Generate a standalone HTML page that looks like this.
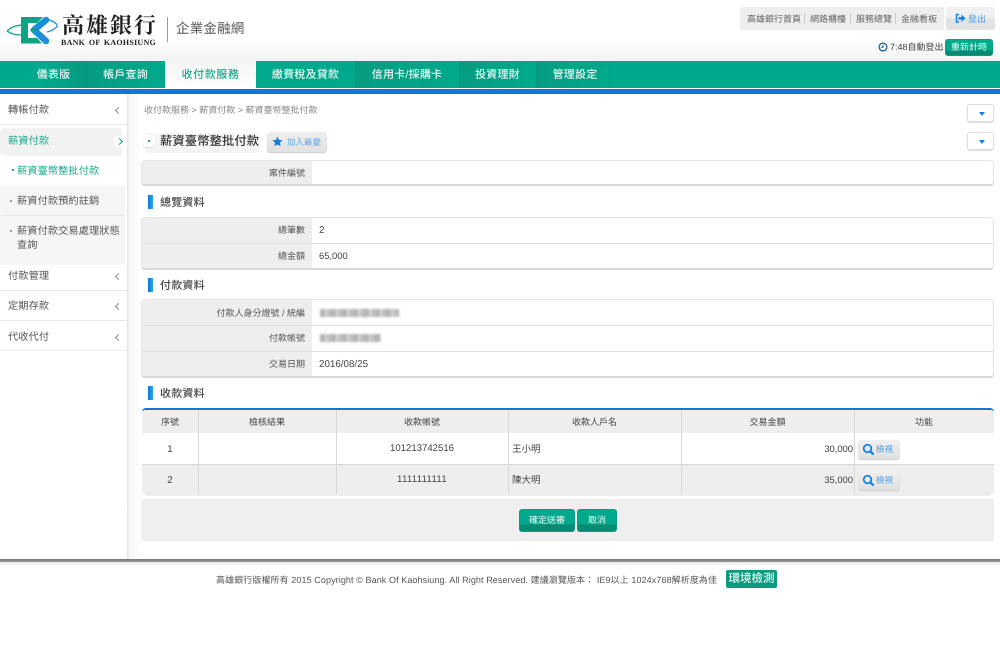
<!DOCTYPE html>
<html lang="zh-Hant"><head><meta charset="utf-8"><title>企業金融網</title>
<style>
html,body{margin:0;padding:0;background:#fff}
#p{position:relative;width:1000px;height:657px;overflow:hidden;font-family:"Liberation Sans","Noto Sans CJK TC",sans-serif;font-size:10px;color:#555;background:#fff;text-rendering:geometricPrecision}
#p div,#p span.a{position:absolute;box-sizing:border-box;white-space:nowrap}
.nav{top:61px;height:27px;line-height:29px;text-align:center;color:#e6f6f1;font-size:11px;letter-spacing:.2px;background:#00a98b;font-weight:500}
.side{left:8px;font-size:10.2px;color:#555;line-height:14px;letter-spacing:.1px}
.sep{left:0;width:127px;height:1px;background:#e9e9e9}
.arr{left:116px;width:5px;height:5px;border-left:1px solid #888;border-bottom:1px solid #888;transform:rotate(45deg)}
.box{left:141px;width:853px;background:#fff;border:1px solid #e6e6e6;border-bottom:2px solid #d8d8d8;border-radius:4px;overflow:hidden}
.lab{left:0;width:170px;background:#eee}
.rowl{left:141px;width:170px;text-align:right;padding-right:6px;font-size:9px;color:#555;height:14px;line-height:14px}
.val{left:319px;font-size:9.800px;color:#444;height:14px;line-height:14px}
.h2{left:160px;font-size:11px;font-weight:500;color:#444;line-height:14px;letter-spacing:.2px}
.bar{left:148px;width:5px;height:14px;background:linear-gradient(90deg,#0a78d8,#2aa4ee)}
.blur{left:320px;height:8px;background:repeating-linear-gradient(90deg,#b4b4b4 0 5px,#d8d8d8 5px 7px,#c0c0c0 7px 11px);filter:blur(1px)}
.th{top:415px;height:14px;line-height:14px;text-align:center;font-size:9px;color:#444}
.td{height:14px;line-height:14px;font-size:9.800px;color:#444}
.vl{width:1px;top:410px;height:85px;background:#d8d8d8}
.btn{background:linear-gradient(#00a98b 0 70%,#078a72 70%);border-radius:3px;color:#e8f8f3;text-align:center;border:1px solid #0d9a80}
.view{left:858px;width:42px;height:19px;background:linear-gradient(#f0f0f0,#e0e0e0);border-radius:3px;box-shadow:0 1px 1px #ccc;font-size:8.500px;color:#4a9de8;line-height:19px;padding-left:18px}
.dd{left:967px;width:27px;height:18px;background:#fff;border:1px solid #ddd;border-radius:3px;box-shadow:0 1px 1px #ddd}
.dd:after{content:"";position:absolute;left:11px;top:7px;border:3px solid transparent;border-top:4px solid #1a7fd8}
.dot{left:10px;width:2px;height:2px;background:#999}
</style></head><body><div id="p">

<!-- header gradient -->
<div style="left:0;top:40px;width:1000px;height:21px;background:linear-gradient(#fff,#f2f2f2)"></div>

<!-- logo -->
<svg style="position:absolute;left:5px;top:14px" width="56" height="34" viewBox="0 0 56 34">
<path d="M2 17C6 13 11 11.500 16 11" fill="none" stroke="#0fa285" stroke-width="1.300"/>
<path d="M2 17C6 20 11 21 16 21" fill="none" stroke="#0fa285" stroke-width="1.300"/>
<path d="M41 5C47 6.500 53 9.500 52 12.500C50 15 46 17 42 18" fill="none" stroke="#1b8fdc" stroke-width="1.300"/>
<path d="M16 3H38L32 9H23V24H32L37 29.500H16Z" fill="#0fa285"/>
<path d="M41 6L29 16L41 27" fill="none" stroke="#1b8fdc" stroke-width="6.500" stroke-linecap="round" stroke-linejoin="round"/>
<path d="M25 16l3-3 3 3-3 3z" fill="#0fa285"/>
</svg>
<div style="left:62px;top:12px;font-family:'Liberation Serif','Noto Serif CJK SC',serif;font-size:22px;font-weight:700;color:#222;letter-spacing:2px;line-height:27px">高雄銀行</div>
<div style="left:61px;top:38px;font-family:'Liberation Serif',serif;font-size:8px;font-weight:700;color:#222;letter-spacing:.25px;line-height:10px;word-spacing:1.500px">BANK OF KAOHSIUNG</div>
<div style="left:167px;top:17px;width:1px;height:25px;background:#999"></div>
<div style="left:176px;top:20px;font-size:13.500px;color:#555;line-height:18px;letter-spacing:.2px">企業金融網</div>

<!-- top right -->
<div style="left:740px;top:7px;width:204px;height:23px;background:#eee;border-radius:2px"></div>
<div style="left:747px;top:13px;font-size:9px;color:#666;line-height:12px">高雄銀行首頁</div>
<div style="left:804px;top:13px;width:1px;height:11px;background:#ccc"></div>
<div style="left:810px;top:13px;font-size:9px;color:#666;line-height:12px">網路櫃檯</div>
<div style="left:850px;top:13px;width:1px;height:11px;background:#ccc"></div>
<div style="left:856px;top:13px;font-size:9px;color:#666;line-height:12px">服務總覽</div>
<div style="left:895px;top:13px;width:1px;height:11px;background:#ccc"></div>
<div style="left:901px;top:13px;font-size:9px;color:#666;line-height:12px">金融看板</div>
<div style="left:946px;top:7px;width:49px;height:23px;background:linear-gradient(#f0f0f0 50%,#e2e2e2 50%);border-radius:2px"></div>
<svg style="position:absolute;left:955px;top:13px" width="11" height="11" viewBox="0 0 11 11"><path d="M4 1.500H1.500V9H4" fill="none" stroke="#1a84e0" stroke-width="1.500"/><path d="M3.500 4H6.500V1.500L10.500 5.300 6.500 9V6.500H3.500Z" fill="#1a84e0"/></svg>
<div style="left:968px;top:13px;font-size:9px;color:#4a9de8;line-height:12px">登出</div>
<svg style="position:absolute;left:878px;top:42px" width="10" height="10" viewBox="0 0 10 10"><circle cx="5" cy="5" r="3.900" fill="none" stroke="#1a5f96" stroke-width="1.300"/><path d="M5 2.800V5.300H3" fill="none" stroke="#1a5f96" stroke-width="1"/></svg>
<div style="left:890px;top:41px;font-size:9px;color:#444;line-height:13px">7:48自動登出</div>
<div class="btn" style="left:945px;top:39px;width:48px;height:17px;font-size:9px;line-height:15px">重新計時</div>

<!-- nav -->
<div class="nav" style="left:0;width:1000px"></div>
<div class="nav" style="left:0;width:87px;padding-left:20px;background:linear-gradient(90deg,#00a98b 50%,#059a80)">儀表版</div>
<div class="nav" style="left:87px;width:77px;background:linear-gradient(90deg,#079c82,#00a98b)">帳戶查詢</div>
<div class="nav" style="left:165px;width:91px;top:61px;height:28px;color:#1aa88d;letter-spacing:.6px;background:linear-gradient(#f4f4f4,#fff)">收付款服務</div>
<div class="nav" style="left:256px;width:99px;background:#00a98b">繳費稅及貸款</div>
<div class="nav" style="left:355px;width:104px;background:linear-gradient(90deg,#079c82,#00a98b)">信用卡/採購卡</div>
<div class="nav" style="left:459px;width:77px;background:linear-gradient(90deg,#079c82,#00a98b)">投資理財</div>
<div class="nav" style="left:536px;width:78px;background:linear-gradient(90deg,#079c82,#00a98b)">管理設定</div>
<div style="left:0;top:89px;width:1000px;height:5px;background:#0f78d6"></div>

<!-- side -->
<div style="left:127px;top:94px;width:14px;height:466px;background:linear-gradient(90deg,#e4e4e4,#f7f7f7 20%,#fff)"></div>
<div style="left:0;top:128px;width:122px;height:28px;background:#f2f2f2;border-radius:4px"></div>
<div style="left:0;top:186px;width:125px;height:79px;background:#f6f6f6"></div>
<div class="side" style="top:104px">轉帳付款</div><div class="arr" style="top:108px"></div><div class="sep" style="top:124px"></div>
<div class="side" style="top:135px;color:#1aa88d">薪資付款</div>
<div style="left:114px;top:136px;width:13px;height:11px;background:#fff;border-radius:2px"></div>
<div style="left:117px;top:139px;width:5px;height:5px;border-right:1.500px solid #0b9a80;border-top:1.500px solid #0b9a80;transform:rotate(45deg)"></div>
<div class="dot" style="left:12px;top:169px;background:#1aa88d"></div>
<div class="side" style="left:17px;top:165px;color:#1aa88d">薪資臺幣整批付款</div>
<div class="dot" style="top:200px"></div>
<div class="side" style="left:17px;top:195px">薪資付款預約註銷</div>
<div style="left:5px;top:215px;width:120px;height:1px;background:#e8e8e8"></div>
<div class="dot" style="top:230px"></div>
<div class="side" style="left:17px;top:225px">薪資付款交易處理狀態</div>
<div class="side" style="left:17px;top:239px">查詢</div>
<div class="side" style="top:270px">付款管理</div><div class="arr" style="top:274px"></div><div class="sep" style="top:290px"></div>
<div class="side" style="top:300px">定期存款</div><div class="arr" style="top:304px"></div><div class="sep" style="top:320px"></div>
<div class="side" style="top:331px">代收代付</div><div class="arr" style="top:335px"></div><div class="sep" style="top:350px"></div>

<!-- breadcrumb -->
<div style="left:144px;top:104px;font-size:9px;color:#888;line-height:12px">收付款服務 &gt; 薪資付款 &gt; 薪資臺幣整批付款</div>
<div class="dd" style="top:104px"></div>
<div class="dd" style="top:132px"></div>

<!-- title -->
<div style="left:145px;top:133px;width:115px;height:20px;background:#f5f5f5;border-radius:4px"></div>
<div style="left:143px;top:135px;width:12px;height:12px;background:#fff;border-radius:3px;box-shadow:0 1px 1px #ddd"></div>
<div style="left:148px;top:140px;width:2px;height:2px;background:#1aa88d"></div>
<div style="left:160px;top:132px;font-size:12.300px;font-weight:500;color:#333;line-height:18px;letter-spacing:.1px">薪資臺幣整批付款</div>
<div style="left:267px;top:132px;width:60px;height:20px;background:linear-gradient(#eee,#e2e2e2);border-radius:3px;box-shadow:0 1px 1px #ccc"></div>
<svg style="position:absolute;left:272px;top:136px" width="11" height="11" viewBox="0 0 20 20"><path d="M10 1l2.800 6 6.400.8-4.700 4.400 1.200 6.500L10 15.500 4.300 18.700l1.200-6.500L.8 7.800 7.200 7z" fill="#1a7fd8"/></svg>
<div style="left:287px;top:136px;font-size:8.500px;color:#5aa5e8;line-height:12px">加入最愛</div>

<!-- case box -->
<div class="box" style="top:160px;height:26px"><div class="lab" style="top:0;height:26px"></div></div>
<div class="rowl" style="top:166px">案件編號</div>

<div class="bar" style="top:195px"></div><div class="h2" style="top:196px">總覽資料</div>

<div class="box" style="top:217px;height:53px"><div class="lab" style="top:0;height:53px"></div><div style="left:0;top:25px;width:853px;height:1px;background:#e0e0e0"></div></div>
<div class="rowl" style="top:223px">總筆數</div><div class="val" style="top:224px">2</div>
<div class="rowl" style="top:249px">總金額</div><div class="val" style="top:249px;font-size:9.400px">65,000</div>

<div class="bar" style="top:278px"></div><div class="h2" style="top:279px">付款資料</div>

<div class="box" style="top:299px;height:79px"><div class="lab" style="top:0;height:79px"></div><div style="left:0;top:25px;width:853px;height:1px;background:#e0e0e0"></div><div style="left:0;top:51px;width:853px;height:1px;background:#e0e0e0"></div></div>
<div class="rowl" style="top:306px">付款人身分證號 / 統編</div>
<div class="blur" style="top:309px;width:46px"></div><div class="blur" style="top:309px;left:364px;width:35px"></div>
<div class="rowl" style="top:331px">付款帳號</div>
<div class="blur" style="top:334px;width:61px"></div>
<div class="rowl" style="top:357px">交易日期</div><div class="val" style="top:358px">2016/08/25</div>

<div class="bar" style="top:386px"></div><div class="h2" style="top:387px">收款資料</div>

<!-- table -->
<div style="left:142px;top:408px;width:852px;height:88px;background:#fff;border-top:2px solid #0f78d6;border-radius:4px 4px 6px 6px;overflow:hidden">
<div style="left:0;top:0;width:852px;height:23px;background:#eee"></div>
<div style="left:0;top:54px;width:852px;height:32px;background:#eee;border-top:1px solid #d8d8d8"></div>
</div>
<div class="vl" style="left:198px"></div><div class="vl" style="left:336px"></div><div class="vl" style="left:508px"></div><div class="vl" style="left:681px"></div><div class="vl" style="left:854px"></div>
<div class="th" style="left:142px;width:56px">序號</div>
<div class="th" style="left:198px;width:138px">檢核結果</div>
<div class="th" style="left:336px;width:172px">收款帳號</div>
<div class="th" style="left:508px;width:173px">收款人戶名</div>
<div class="th" style="left:681px;width:173px">交易金額</div>
<div class="th" style="left:854px;width:140px">功能</div>

<div class="td" style="left:142px;width:56px;top:443px;text-align:center">1</div>
<div class="td" style="left:336px;width:172px;top:442px;text-align:center;font-size:9.600px">101213742516</div>
<div class="td" style="left:512px;top:443px;font-size:9.500px">王小明</div>
<div class="td" style="left:681px;width:172px;top:442px;text-align:right;font-size:9.400px">30,000</div>
<div class="view" style="top:440px">檢視</div>
<svg style="position:absolute;left:862px;top:443px" width="13" height="13" viewBox="0 0 13 13"><circle cx="5.500" cy="5.500" r="3.800" fill="none" stroke="#0a80e8" stroke-width="1.700"/><path d="M8.300 8.300L11.500 11.500" stroke="#0a80e8" stroke-width="2.200"/></svg>

<div class="td" style="left:142px;width:56px;top:474px;text-align:center">2</div>
<div class="td" style="left:336px;width:172px;top:473px;text-align:center;font-size:9.600px;letter-spacing:.3px">1111111111</div>
<div class="td" style="left:512px;top:474px;font-size:9.500px">陳大明</div>
<div class="td" style="left:681px;width:172px;top:473px;text-align:right;font-size:9.400px">35,000</div>
<div class="view" style="top:471px">檢視</div>
<svg style="position:absolute;left:862px;top:474px" width="13" height="13" viewBox="0 0 13 13"><circle cx="5.500" cy="5.500" r="3.800" fill="none" stroke="#0a80e8" stroke-width="1.700"/><path d="M8.300 8.300L11.500 11.500" stroke="#0a80e8" stroke-width="2.200"/></svg>

<!-- actions -->
<div style="left:141px;top:499px;width:853px;height:42px;background:#efefef"></div>
<div class="btn" style="left:519px;top:509px;width:56px;height:23px;font-size:9px;line-height:21px">確定送審</div>
<div class="btn" style="left:577px;top:509px;width:40px;height:23px;font-size:9px;line-height:21px">取消</div>

<!-- footer -->
<div style="left:0;top:559px;width:1000px;height:3px;background:linear-gradient(#777,#999)"></div>
<div style="left:0;top:562px;width:1000px;height:4px;background:linear-gradient(#e8e8e8,#fff)"></div>
<div style="left:216px;top:573px;font-size:9px;color:#555;line-height:14px;letter-spacing:.09px">高雄銀行版權所有 2015 Copyright © Bank Of Kaohsiung. All Right Reserved. 建議瀏覽版本： IE9以上 1024x768解析度為佳</div>
<div style="left:726px;top:570px;width:51px;height:18px;background:#0b9a80;border-radius:2px;color:#e8f8f3;font-size:11.500px;line-height:19px;text-align:center;font-weight:500">環境檢測</div>
</div></body></html>
